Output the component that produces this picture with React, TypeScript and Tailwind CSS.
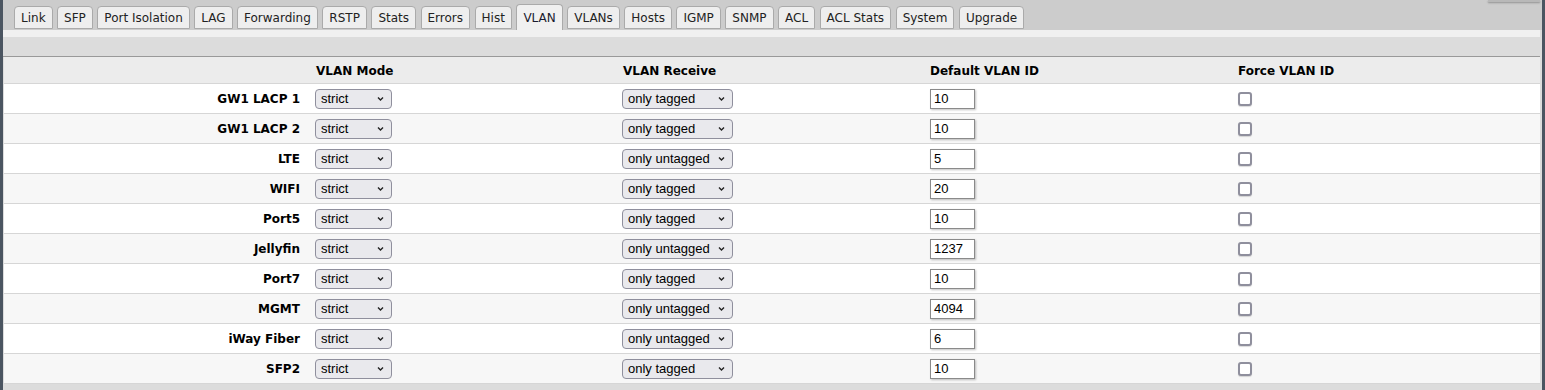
const tabs = ['Link', 'SFP', 'Port Isolation', 'LAG', 'Forwarding', 'RSTP', 'Stats', 'Errors', 'Hist', 'VLAN', 'VLANs', 'Hosts', 'IGMP', 'SNMP', 'ACL', 'ACL Stats', 'System', 'Upgrade'];

const ports = [
  { name: 'GW1 LACP 1', receive: 'only tagged', id: '10' },
  { name: 'GW1 LACP 2', receive: 'only tagged', id: '10' },
  { name: 'LTE', receive: 'only untagged', id: '5' },
  { name: 'WIFI', receive: 'only tagged', id: '20' },
  { name: 'Port5', receive: 'only tagged', id: '10' },
  { name: 'Jellyfin', receive: 'only untagged', id: '1237' },
  { name: 'Port7', receive: 'only tagged', id: '10' },
  { name: 'MGMT', receive: 'only untagged', id: '4094' },
  { name: 'iWay Fiber', receive: 'only untagged', id: '6' },
  { name: 'SFP2', receive: 'only tagged', id: '10' },
];

const Chevron = () => (
  <svg width="9" height="6" viewBox="0 0 9 6" className="shrink-0">
    <path d="M2 1.5 L4.5 4 L7 1.5" fill="none" stroke="#222" strokeWidth="1.4" />
  </svg>
);

const FakeSelect = ({ value, width }: { value: string; width: string }) => (
  <div className={`${width} h-[20px] flex items-center justify-between pl-[5px] pr-[6px] rounded-[4px] border border-[#8f8f9d] bg-[#e9e9ed] text-[13px] text-black font-['Liberation_Sans',sans-serif]`}>
    <span>{value}</span>
    <Chevron />
  </div>
);

const App = () => {
  return (
    <div className="w-[1545px] h-[390px] bg-[#4b5561] px-[3px] overflow-hidden font-['DejaVu_Sans',Verdana,sans-serif] text-[12px]">
      <div className="h-full bg-[#dcdcdc] flex flex-col">
        {/* tab bar */}
        <div className="relative h-[30px] bg-[#cccccc] flex items-end pl-[11px] gap-[4.5px]">
          <div className="absolute right-[2px] top-0 w-[52px] h-[2px] bg-[#b8b8b8] shadow-[0_1px_2px_rgba(0,0,0,0.3)]" />
          {tabs.map((t) => (
            <div
              key={t}
              className={
                t === 'VLAN'
                  ? 'h-[26px] px-[6px] flex items-center bg-[#f0f0f0] border border-b-0 border-[#aaaaaa] rounded-t-[4px] text-[#1a1a2e]'
                  : 'h-[23px] mb-[1px] px-[6px] flex items-center bg-[#eeeeee] border border-[#aaaaaa] rounded-t-[4px] text-[#222]'
              }
            >
              {t}
            </div>
          ))}
        </div>
        <div className="h-[7px] bg-[#f0f0f0] mr-[2px]" />
        <div className="h-[20px] bg-[#dcdcdc] border-b border-[#999999] mr-[2px]" />

        <div className="mr-[2px] ml-[1px]">
          {/* header */}
          <div className="grid grid-cols-[311px_307px_308px_308px_1fr] h-[27px] pt-[2px] bg-[#ececec] border-b border-[#d6d6d6] font-bold text-black items-center">
            <div />
            <div className="pl-[1px]">VLAN Mode</div>
            <div className="pl-[1px]">VLAN Receive</div>
            <div>Default VLAN ID</div>
            <div>Force VLAN ID</div>
          </div>

          {ports.map((p, i) => (
            <div
              key={p.name}
              className={`grid grid-cols-[311px_307px_308px_308px_1fr] h-[30px] pt-[1px] border-b border-[#d6d6d6] items-center ${i % 2 === 0 ? 'bg-white' : 'bg-[#f7f7f7]'}`}
            >
              <div className="text-right pr-[15px] font-bold text-black">{p.name}</div>
              <div>
                <FakeSelect value="strict" width="w-[77px]" />
              </div>
              <div>
                <FakeSelect value={p.receive} width="w-[111px]" />
              </div>
              <div>
                <div className="w-[45px] h-[20px] border border-[#8a8a8a] bg-white shadow-[1px_1px_2px_rgba(0,0,0,0.25)] pl-[3px] text-[13px] leading-[18px] text-black font-['Liberation_Sans',sans-serif]">
                  {p.id}
                </div>
              </div>
              <div>
                <div className="w-[14px] h-[14px] rounded-[3px] border-2 border-[#8f8f9d] bg-white shadow-[0_1px_1px_rgba(0,0,0,0.15)]" />
              </div>
            </div>
          ))}
        </div>
      </div>
    </div>
  );
};

export default App;
